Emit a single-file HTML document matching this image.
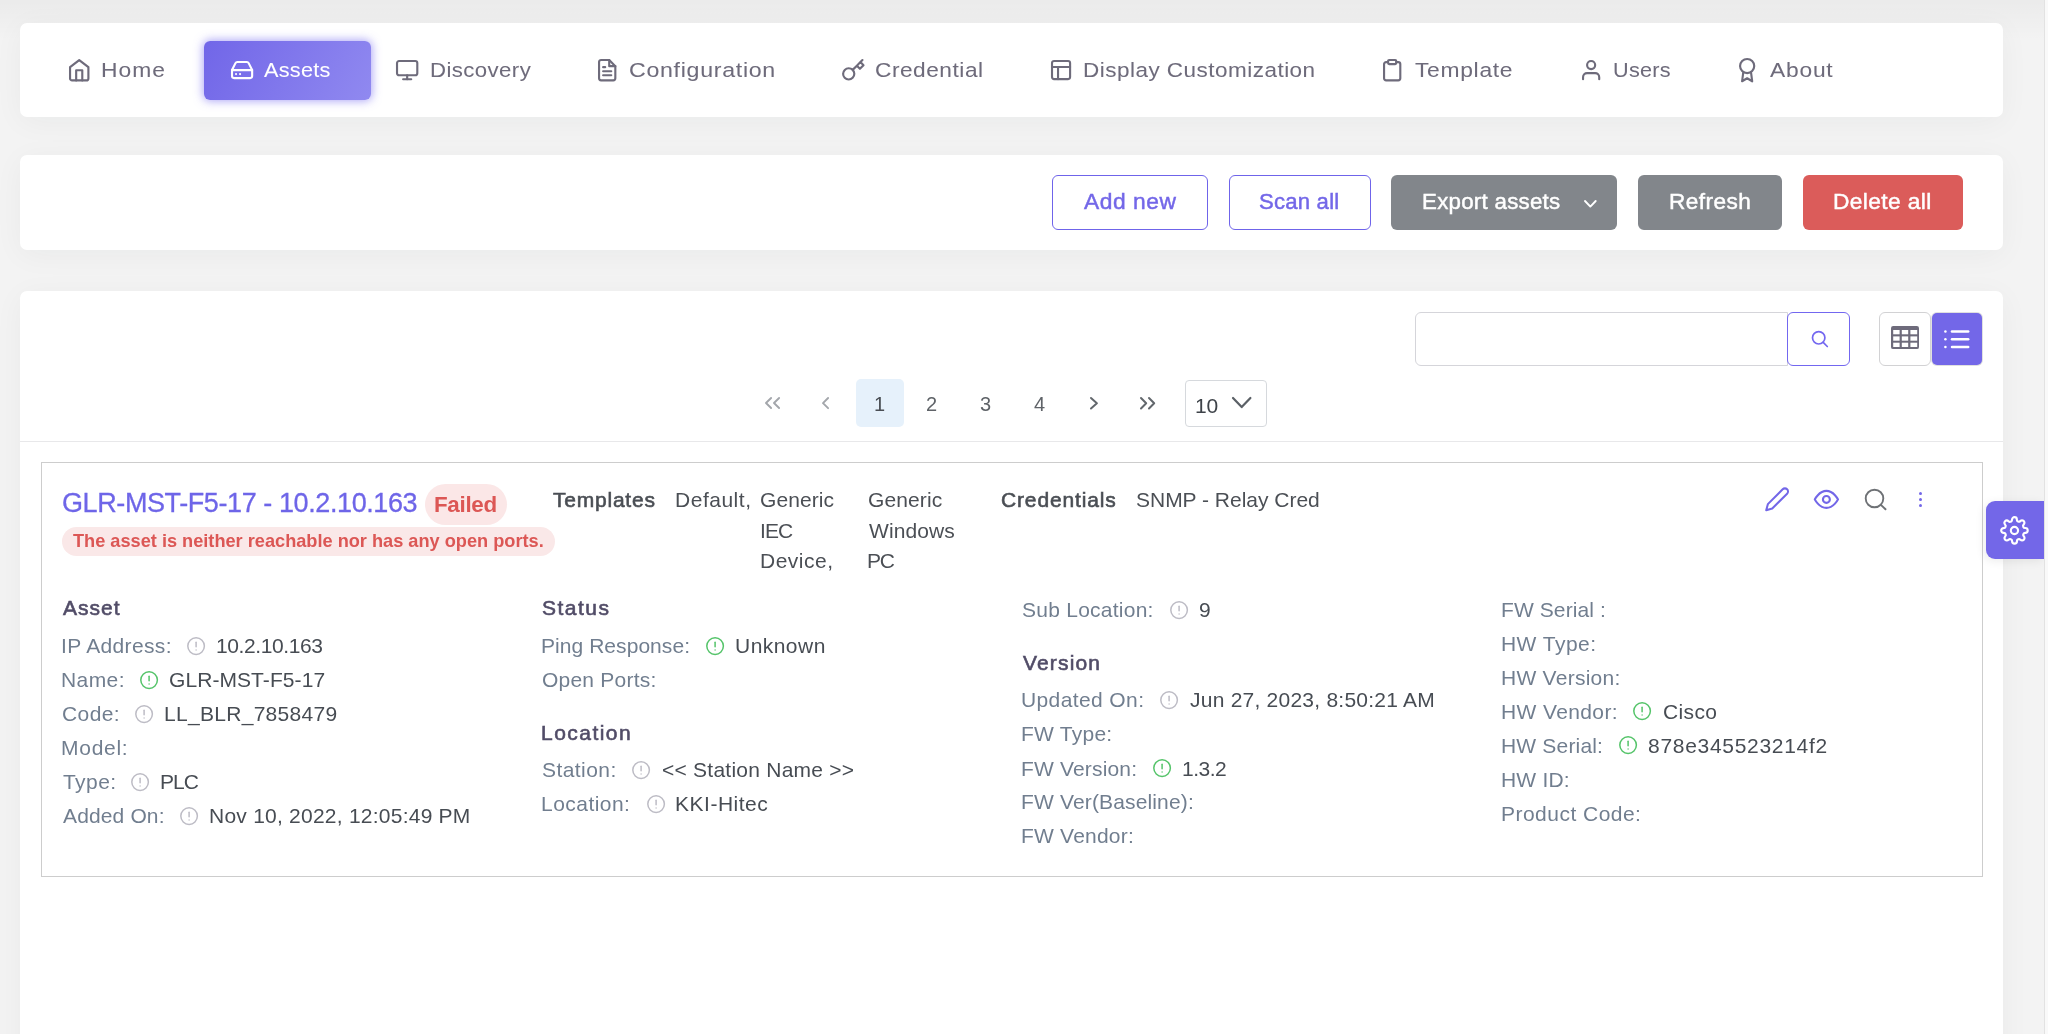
<!DOCTYPE html>
<html><head><meta charset="utf-8"><title>Assets</title>
<style>
html,body{margin:0;padding:0;}
body{width:2048px;height:1034px;overflow:hidden;background:#f3f3f3;position:relative;font-family:"Liberation Sans",sans-serif;}
.card{position:absolute;left:20px;width:1983px;background:#fff;border-radius:7px;box-shadow:0 5px 30px rgba(34,41,47,0.045);}
.t{position:absolute;white-space:nowrap;line-height:1;will-change:transform;}
.m{-webkit-text-stroke:0.05px currentColor;}
.sb2{-webkit-text-stroke:0.6px currentColor;}
.tt{-webkit-text-stroke:0.3px currentColor;}
.m2{-webkit-text-stroke:0.45px currentColor;}
.b{position:absolute;box-sizing:border-box;}
.ob{border:1.8px solid #6f64ea;border-radius:6px;}
.i{position:absolute;overflow:visible;}
.sb{position:absolute;left:2044px;top:0;width:4px;height:1034px;background:#f9f9f9;border-left:1px solid #e2e2e2;box-sizing:border-box;}
</style></head><body>
<div class="b" style="left:0;top:0;width:2048px;height:40px;background:linear-gradient(rgba(0,0,0,0.035),rgba(0,0,0,0))"></div>
<div class="card" style="top:23px;height:94px"></div>
<div class="card" style="top:155px;height:95px"></div>
<div class="card" style="top:291px;height:800px"></div>
<div class="b" style="left:204px;top:40.5px;width:167px;height:59px;border-radius:6px;background:linear-gradient(118deg,#7166e8,#9089f0);box-shadow:0 0 10px 1px rgba(115,103,240,0.6)"></div>
<div class="t m" style="left:100.57px;top:58.62px;font-size:21px;color:#6e6b7b;font-weight:400;letter-spacing:0.951px;transform:scaleX(1.0871);transform-origin:0 0;">Home</div>
<div class="t m" style="left:264.00px;top:58.62px;font-size:21px;color:#fff;font-weight:400;letter-spacing:0.258px;transform:scaleX(1.0321);transform-origin:0 0;">Assets</div>
<div class="t m" style="left:429.53px;top:58.62px;font-size:21px;color:#6e6b7b;font-weight:400;letter-spacing:0.402px;transform:scaleX(1.0563);transform-origin:0 0;">Discovery</div>
<div class="t m" style="left:629.44px;top:58.62px;font-size:21px;color:#6e6b7b;font-weight:400;letter-spacing:0.637px;transform:scaleX(1.1031);transform-origin:0 0;">Configuration</div>
<div class="t m" style="left:875.27px;top:58.62px;font-size:21px;color:#6e6b7b;font-weight:400;letter-spacing:0.501px;transform:scaleX(1.0781);transform-origin:0 0;">Credential</div>
<div class="t m" style="left:1083.20px;top:58.62px;font-size:21px;color:#6e6b7b;font-weight:400;letter-spacing:0.451px;transform:scaleX(1.0708);transform-origin:0 0;">Display Customization</div>
<div class="t m" style="left:1415.24px;top:58.62px;font-size:21px;color:#6e6b7b;font-weight:400;letter-spacing:0.641px;transform:scaleX(1.0873);transform-origin:0 0;">Template</div>
<div class="t m" style="left:1612.78px;top:58.62px;font-size:21px;color:#6e6b7b;font-weight:400;letter-spacing:0.252px;transform:scaleX(1.0297);transform-origin:0 0;">Users</div>
<div class="t m" style="left:1770.30px;top:58.62px;font-size:21px;color:#6e6b7b;font-weight:400;letter-spacing:0.718px;transform:scaleX(1.0853);transform-origin:0 0;">About</div>
<svg class="i" style="left:67.16px;top:57.98px;width:24.46px;height:24.46px;color:#6e6b7b;" viewBox="0 0 24 24" fill="none" stroke="currentColor" stroke-width="2.1" stroke-linecap="round" stroke-linejoin="round"><path d="M3 9l9-7 9 7v11a2 2 0 0 1-2 2H5a2 2 0 0 1-2-2z"/><polyline points="9 22 9 12 15 12 15 22"/></svg>
<svg class="i" style="left:229.99px;top:58.38px;width:24.17px;height:24.17px;color:#fff;" viewBox="0 0 24 24" fill="none" stroke="currentColor" stroke-width="2.1" stroke-linecap="round" stroke-linejoin="round"><line x1="22" y1="12" x2="2" y2="12"/><path d="M5.45 5.11L2 12v6a2 2 0 0 0 2 2h16a2 2 0 0 0 2-2v-6l-3.45-6.89A2 2 0 0 0 16.76 4H7.24a2 2 0 0 0-1.79 1.11z"/><line x1="6" y1="16" x2="6.01" y2="16"/><line x1="10" y1="16" x2="10.01" y2="16"/></svg>
<svg class="i" style="left:395.39px;top:57.97px;width:24.33px;height:24.33px;color:#6e6b7b;" viewBox="0 0 24 24" fill="none" stroke="currentColor" stroke-width="2.1" stroke-linecap="round" stroke-linejoin="round"><rect x="2" y="3" width="20" height="14" rx="2" ry="2"/><line x1="8" y1="21" x2="16" y2="21"/><line x1="12" y1="17" x2="12" y2="21"/></svg>
<svg class="i" style="left:595.35px;top:57.98px;width:24.40px;height:24.40px;color:#6e6b7b;" viewBox="0 0 24 24" fill="none" stroke="currentColor" stroke-width="2.1" stroke-linecap="round" stroke-linejoin="round"><path d="M14 2H6a2 2 0 0 0-2 2v16a2 2 0 0 0 2 2h12a2 2 0 0 0 2-2V8z"/><polyline points="14 2 14 8 20 8"/><line x1="16" y1="13" x2="8" y2="13"/><line x1="16" y1="17" x2="8" y2="17"/><polyline points="10 9 9 9 8 9"/></svg>
<svg class="i" style="left:841.17px;top:57.88px;width:24.55px;height:24.55px;color:#6e6b7b;" viewBox="0 0 24 24" fill="none" stroke="currentColor" stroke-width="2.1" stroke-linecap="round" stroke-linejoin="round"><path d="M21 2l-2 2m-7.61 7.61a5.5 5.5 0 1 1-7.778 7.778 5.5 5.5 0 0 1 7.777-7.777zm0 0L15.5 7.5m0 0l3 3L22 7l-3-3m-3.5 3.5L19 4"/></svg>
<svg class="i" style="left:1048.99px;top:57.99px;width:24.12px;height:24.12px;color:#6e6b7b;" viewBox="0 0 24 24" fill="none" stroke="currentColor" stroke-width="2.1" stroke-linecap="round" stroke-linejoin="round"><rect x="3" y="3" width="18" height="18" rx="2" ry="2"/><line x1="3" y1="9" x2="21" y2="9"/><line x1="9" y1="21" x2="9" y2="9"/></svg>
<svg class="i" style="left:1379.86px;top:58.49px;width:24.36px;height:24.36px;color:#6e6b7b;" viewBox="0 0 24 24" fill="none" stroke="currentColor" stroke-width="2.1" stroke-linecap="round" stroke-linejoin="round"><path d="M16 4h2a2 2 0 0 1 2 2v14a2 2 0 0 1-2 2H6a2 2 0 0 1-2-2V6a2 2 0 0 1 2-2h2"/><rect x="8" y="2" width="8" height="4" rx="1" ry="1"/></svg>
<svg class="i" style="left:1578.97px;top:58.18px;width:24.27px;height:24.27px;color:#6e6b7b;" viewBox="0 0 24 24" fill="none" stroke="currentColor" stroke-width="2.1" stroke-linecap="round" stroke-linejoin="round"><path d="M20 21v-2a4 4 0 0 0-4-4H8a4 4 0 0 0-4 4v2"/><circle cx="12" cy="7" r="4"/></svg>
<svg class="i" style="left:1734.65px;top:58.40px;width:24.30px;height:24.30px;color:#6e6b7b;" viewBox="0 0 24 24" fill="none" stroke="currentColor" stroke-width="2.1" stroke-linecap="round" stroke-linejoin="round"><circle cx="12" cy="8" r="7"/><polyline points="8.21 13.89 7 23 12 20 17 23 15.79 13.88"/></svg>
<div class="b ob" style="left:1052px;top:175.3px;width:155.5px;height:54.4px"></div>
<div class="b ob" style="left:1228.7px;top:175.3px;width:141.9px;height:54.4px"></div>
<div class="b" style="left:1391.3px;top:175.3px;width:226.1px;height:54.4px;background:#82868b;border-radius:6px"></div>
<div class="b" style="left:1638.2px;top:175.3px;width:143.8px;height:54.4px;background:#82868b;border-radius:6px"></div>
<div class="b" style="left:1802.7px;top:175.3px;width:159.9px;height:54.4px;background:#db5c5a;border-radius:6px"></div>
<div class="t m2" style="left:1083.70px;top:192.00px;font-size:21.5px;color:#7367e8;font-weight:400;letter-spacing:0.526px;transform:scaleX(1.0599);transform-origin:0 0;">Add new</div>
<div class="t m2" style="left:1259.20px;top:192.00px;font-size:21.5px;color:#7367e8;font-weight:400;letter-spacing:0.201px;transform:scaleX(1.0293);transform-origin:0 0;">Scan all</div>
<div class="t m2" style="left:1421.82px;top:192.00px;font-size:21.5px;color:#fff;font-weight:400;letter-spacing:0.253px;transform:scaleX(1.0370);transform-origin:0 0;">Export assets</div>
<div class="t m2" style="left:1668.59px;top:192.00px;font-size:21.5px;color:#fff;font-weight:400;letter-spacing:0.403px;transform:scaleX(1.0528);transform-origin:0 0;">Refresh</div>
<div class="t m2" style="left:1832.88px;top:192.00px;font-size:21.5px;color:#fff;font-weight:400;letter-spacing:0.355px;transform:scaleX(1.0587);transform-origin:0 0;">Delete all</div>
<svg class="i" style="left:1582.80px;top:198.80px;width:14.70px;height:9.60px;color:#fff;" viewBox="0 0 14.7 9.6" fill="none" stroke="currentColor" stroke-width="1.9" stroke-linecap="round" stroke-linejoin="round"><polyline points="2 2 7.35 7.6 12.7 2"/></svg>
<div class="b" style="left:1414.9px;top:311.7px;width:373px;height:54.2px;border:1.5px solid #d5d5da;border-radius:6px 0 0 6px;box-sizing:border-box"></div>
<div class="b" style="left:1786.9px;top:311.5px;width:63.1px;height:54.3px;border:1.7px solid #7367f0;border-radius:6px;box-sizing:border-box"></div>
<svg class="i" style="left:1808.00px;top:327.00px;width:22.00px;height:22.00px;color:#7367f0;" viewBox="0 0 22 22" fill="none" stroke="currentColor" stroke-width="1.7" stroke-linecap="round" stroke-linejoin="round"><circle cx="10.7" cy="10.8" r="6.2"/><line x1="15.2" y1="15.3" x2="19.3" y2="19.5"/></svg>
<div class="b" style="left:1879.4px;top:311.5px;width:52px;height:54.5px;border:1.8px solid #d2d2d4;border-radius:6px;box-sizing:border-box"></div>
<div class="b" style="left:1932.3px;top:312.8px;width:49.3px;height:52.5px;background:#7367e8;border-radius:5px;box-shadow:0 0 0 1px rgba(0,0,0,0.12)"></div>
<svg class="i" style="left:1890.80px;top:326.30px;width:28.00px;height:23.10px;color:#6e6b7b;" viewBox="0 0 28 23.1" fill="none" stroke="currentColor" stroke-width="0" stroke-linecap="round" stroke-linejoin="round"><rect x="0" y="0" width="28" height="23.1" rx="2.2" fill="#6e6b7b" stroke="none"/><rect x="2.20" y="4.00" width="6.40" height="4.30" fill="#fff" stroke="none"/><rect x="2.20" y="10.40" width="6.40" height="4.30" fill="#fff" stroke="none"/><rect x="2.20" y="16.70" width="6.40" height="4.30" fill="#fff" stroke="none"/><rect x="10.80" y="4.00" width="6.40" height="4.30" fill="#fff" stroke="none"/><rect x="10.80" y="10.40" width="6.40" height="4.30" fill="#fff" stroke="none"/><rect x="10.80" y="16.70" width="6.40" height="4.30" fill="#fff" stroke="none"/><rect x="19.40" y="4.00" width="6.80" height="4.30" fill="#fff" stroke="none"/><rect x="19.40" y="10.40" width="6.80" height="4.30" fill="#fff" stroke="none"/><rect x="19.40" y="16.70" width="6.80" height="4.30" fill="#fff" stroke="none"/></svg>
<svg class="i" style="left:1944.30px;top:329.60px;width:25.30px;height:18.30px;color:#fff;" viewBox="0 0 25.3 18.3" fill="none" stroke="currentColor" stroke-width="2.5" stroke-linecap="round" stroke-linejoin="round"><line x1="8" y1="1.4" x2="24.2" y2="1.4"/><line x1="8" y1="9.15" x2="24.2" y2="9.15"/><line x1="8" y1="16.9" x2="24.2" y2="16.9"/><line x1="1.4" y1="1.4" x2="1.42" y2="1.4"/><line x1="1.4" y1="9.15" x2="1.42" y2="9.15"/><line x1="1.4" y1="16.9" x2="1.42" y2="16.9"/></svg>
<div class="b" style="left:856px;top:379.4px;width:47.8px;height:47.6px;background:#e6f1fb;border-radius:5px"></div>
<svg class="i" style="left:763.90px;top:396.10px;width:9.10px;height:14.00px;color:#a3a6ab;" viewBox="0 0 9.10 14.00" fill="none" stroke="currentColor" stroke-width="1.9" stroke-linecap="round" stroke-linejoin="round"><polyline points="7.10 2.00 2.00 7.00 7.10 12.00"/></svg>
<svg class="i" style="left:772.20px;top:396.10px;width:9.10px;height:14.00px;color:#a3a6ab;" viewBox="0 0 9.10 14.00" fill="none" stroke="currentColor" stroke-width="1.9" stroke-linecap="round" stroke-linejoin="round"><polyline points="7.10 2.00 2.00 7.00 7.10 12.00"/></svg>
<svg class="i" style="left:821.40px;top:396.10px;width:9.10px;height:14.20px;color:#a3a6ab;" viewBox="0 0 9.10 14.20" fill="none" stroke="currentColor" stroke-width="1.9" stroke-linecap="round" stroke-linejoin="round"><polyline points="7.10 2.00 2.00 7.10 7.10 12.20"/></svg>
<svg class="i" style="left:1088.90px;top:395.90px;width:9.90px;height:14.50px;color:#62676c;" viewBox="0 0 9.90 14.50" fill="none" stroke="currentColor" stroke-width="2.0" stroke-linecap="round" stroke-linejoin="round"><polyline points="2.00 2.00 7.90 7.25 2.00 12.50"/></svg>
<svg class="i" style="left:1138.60px;top:395.90px;width:9.20px;height:14.50px;color:#62676c;" viewBox="0 0 9.20 14.50" fill="none" stroke="currentColor" stroke-width="2.0" stroke-linecap="round" stroke-linejoin="round"><polyline points="2.00 2.00 7.20 7.25 2.00 12.50"/></svg>
<svg class="i" style="left:1146.70px;top:395.90px;width:9.20px;height:14.50px;color:#62676c;" viewBox="0 0 9.20 14.50" fill="none" stroke="currentColor" stroke-width="2.0" stroke-linecap="round" stroke-linejoin="round"><polyline points="2.00 2.00 7.20 7.25 2.00 12.50"/></svg>
<div class="t" style="left:873.50px;top:393.87px;font-size:20px;color:#4a4e54;font-weight:400;letter-spacing:0.000px;">1</div>
<div class="t" style="left:926.20px;top:393.87px;font-size:20px;color:#5f6368;font-weight:400;letter-spacing:0.000px;">2</div>
<div class="t" style="left:980.30px;top:393.87px;font-size:20px;color:#5f6368;font-weight:400;letter-spacing:0.000px;">3</div>
<div class="t" style="left:1033.60px;top:393.87px;font-size:20px;color:#5f6368;font-weight:400;letter-spacing:0.000px;">4</div>
<div class="b" style="left:1185.3px;top:380px;width:81.7px;height:47px;border:1.5px solid #d6d9dd;border-radius:4px;box-sizing:border-box"></div>
<div class="t" style="left:1194.92px;top:395.22px;font-size:21px;color:#3e4349;font-weight:400;letter-spacing:-0.300px;">10</div>
<svg class="i" style="left:1231.20px;top:396.40px;width:21.40px;height:13.10px;color:#5b6066;" viewBox="0 0 21.4 13.1" fill="none" stroke="currentColor" stroke-width="2.2" stroke-linecap="round" stroke-linejoin="round"><polyline points="2 2 10.7 11.1 19.4 2"/></svg>
<div class="b" style="left:20px;top:440.5px;width:1983px;height:1.5px;background:#e8e8ea"></div>
<div class="b" style="left:40.5px;top:461.8px;width:1942px;height:415px;border:1.5px solid #cdcdcd;box-sizing:border-box"></div>
<div class="t tt" style="left:62.25px;top:490.14px;font-size:27px;color:#6e65e8;font-weight:400;letter-spacing:-0.407px;">GLR-MST-F5-17 - 10.2.10.163</div>
<div class="b" style="left:424.8px;top:483.6px;width:82.7px;height:41.1px;background:#fbe7e7;border-radius:21px"></div>
<div class="t" style="left:434.44px;top:493.64px;font-size:22.4px;color:#dc5755;font-weight:700;letter-spacing:-0.305px;">Failed</div>
<div class="b" style="left:62.2px;top:527px;width:492.8px;height:28.9px;background:#fae8e8;border-radius:14.5px"></div>
<div class="t" style="left:72.82px;top:531.89px;font-size:18.2px;color:#dc5755;font-weight:700;letter-spacing:-0.006px;">The asset is neither reachable nor has any open ports.</div>
<div class="t sb2" style="left:553.28px;top:489.02px;font-size:21px;color:#4a4e54;font-weight:400;letter-spacing:0.774px;">Templates</div>
<div class="t" style="left:675.32px;top:489.32px;font-size:21px;color:#4b4f55;font-weight:400;letter-spacing:0.517px;">Default,</div>
<div class="t" style="left:760.45px;top:489.32px;font-size:21px;color:#4b4f55;font-weight:400;letter-spacing:0.096px;">Generic</div>
<div class="t" style="left:759.61px;top:519.82px;font-size:21px;color:#4b4f55;font-weight:400;letter-spacing:-0.920px;">IEC</div>
<div class="t" style="left:759.82px;top:549.92px;font-size:21px;color:#4b4f55;font-weight:400;letter-spacing:0.506px;">Device,</div>
<div class="t" style="left:867.95px;top:489.32px;font-size:21px;color:#4b4f55;font-weight:400;letter-spacing:0.113px;">Generic</div>
<div class="t" style="left:869.00px;top:519.82px;font-size:21px;color:#4b4f55;font-weight:400;letter-spacing:0.097px;">Windows</div>
<div class="t" style="left:867.32px;top:549.92px;font-size:21px;color:#4b4f55;font-weight:400;letter-spacing:-1.370px;">PC</div>
<div class="t sb2" style="left:1000.95px;top:489.02px;font-size:21px;color:#4a4e54;font-weight:400;letter-spacing:0.852px;">Credentials</div>
<div class="t" style="left:1136.06px;top:489.32px;font-size:21px;color:#4b4f55;font-weight:400;letter-spacing:-0.016px;">SNMP - Relay Cred</div>
<svg class="i" style="left:1763.60px;top:485.90px;width:26.40px;height:26.40px;color:#7367e8;" viewBox="0 0 24 24" fill="none" stroke="currentColor" stroke-width="1.85" stroke-linecap="round" stroke-linejoin="round"><path d="M17 3a2.828 2.828 0 1 1 4 4L7.5 20.5 2 22l1.5-5.5L17 3z"/></svg>
<svg class="i" style="left:1813.00px;top:486.30px;width:26.80px;height:26.80px;color:#7367e8;" viewBox="0 0 24 24" fill="none" stroke="currentColor" stroke-width="1.9" stroke-linecap="round" stroke-linejoin="round"><path d="M1.6 12s3.8-7.6 10.4-7.6 10.4 7.6 10.4 7.6-3.8 7.6-10.4 7.6S1.6 12 1.6 12z"/><circle cx="12" cy="12" r="3.1"/></svg>
<svg class="i" style="left:1862.00px;top:486.00px;width:26.00px;height:26.00px;color:#6e7175;" viewBox="0 0 26 26" fill="none" stroke="currentColor" stroke-width="1.9" stroke-linecap="round" stroke-linejoin="round"><circle cx="12.5" cy="12.5" r="8.8"/><line x1="18.9" y1="18.9" x2="23.5" y2="23.3"/></svg>
<div class="b" style="left:1918.90px;top:491.90px;width:3.4px;height:3.4px;border-radius:50%;background:#7367e8"></div>
<div class="b" style="left:1918.90px;top:497.80px;width:3.4px;height:3.4px;border-radius:50%;background:#7367e8"></div>
<div class="b" style="left:1918.90px;top:503.80px;width:3.4px;height:3.4px;border-radius:50%;background:#7367e8"></div>
<div class="t sb2" style="left:63.00px;top:597.42px;font-size:21px;color:#514c67;font-weight:400;letter-spacing:1.025px;">Asset</div>
<div class="t" style="left:61.11px;top:635.22px;font-size:21px;color:#717e8f;font-weight:400;letter-spacing:0.348px;">IP Address:</div>
<svg class="i" style="left:187.20px;top:636.60px;width:18.20px;height:18.20px;color:#bdbcc5;" viewBox="0 0 18.2 18.2" fill="none" stroke="currentColor" stroke-width="1.5" stroke-linecap="round" stroke-linejoin="round"><circle cx="9.1" cy="9.1" r="8.3"/><line x1="9.1" y1="5.2" x2="9.1" y2="9.8"/><line x1="9.1" y1="12.9" x2="9.1" y2="12.95"/></svg>
<div class="t" style="left:215.93px;top:635.22px;font-size:21px;color:#474c53;font-weight:400;letter-spacing:-0.397px;">10.2.10.163</div>
<div class="t" style="left:61.32px;top:669.22px;font-size:21px;color:#717e8f;font-weight:400;letter-spacing:0.405px;">Name:</div>
<svg class="i" style="left:140.00px;top:670.60px;width:18.20px;height:18.20px;color:#55c46a;" viewBox="0 0 18.2 18.2" fill="none" stroke="currentColor" stroke-width="1.5" stroke-linecap="round" stroke-linejoin="round"><circle cx="9.1" cy="9.1" r="8.3"/><line x1="9.1" y1="5.2" x2="9.1" y2="9.8"/><line x1="9.1" y1="12.9" x2="9.1" y2="12.95"/></svg>
<div class="t" style="left:169.45px;top:669.22px;font-size:21px;color:#474c53;font-weight:400;letter-spacing:0.075px;">GLR-MST-F5-17</div>
<div class="t" style="left:61.95px;top:703.22px;font-size:21px;color:#717e8f;font-weight:400;letter-spacing:0.417px;">Code:</div>
<svg class="i" style="left:135.30px;top:704.60px;width:18.20px;height:18.20px;color:#bdbcc5;" viewBox="0 0 18.2 18.2" fill="none" stroke="currentColor" stroke-width="1.5" stroke-linecap="round" stroke-linejoin="round"><circle cx="9.1" cy="9.1" r="8.3"/><line x1="9.1" y1="5.2" x2="9.1" y2="9.8"/><line x1="9.1" y1="12.9" x2="9.1" y2="12.95"/></svg>
<div class="t" style="left:164.12px;top:703.22px;font-size:21px;color:#474c53;font-weight:400;letter-spacing:0.297px;">LL_BLR_7858479</div>
<div class="t" style="left:61.32px;top:737.22px;font-size:21px;color:#717e8f;font-weight:400;letter-spacing:0.733px;">Model:</div>
<div class="t" style="left:62.58px;top:771.22px;font-size:21px;color:#717e8f;font-weight:400;letter-spacing:0.440px;">Type:</div>
<svg class="i" style="left:131.40px;top:772.60px;width:18.20px;height:18.20px;color:#bdbcc5;" viewBox="0 0 18.2 18.2" fill="none" stroke="currentColor" stroke-width="1.5" stroke-linecap="round" stroke-linejoin="round"><circle cx="9.1" cy="9.1" r="8.3"/><line x1="9.1" y1="5.2" x2="9.1" y2="9.8"/><line x1="9.1" y1="12.9" x2="9.1" y2="12.95"/></svg>
<div class="t" style="left:160.32px;top:771.22px;font-size:21px;color:#474c53;font-weight:400;letter-spacing:-0.965px;">PLC</div>
<div class="t" style="left:63.00px;top:805.22px;font-size:21px;color:#717e8f;font-weight:400;letter-spacing:0.138px;">Added On:</div>
<svg class="i" style="left:180.20px;top:806.60px;width:18.20px;height:18.20px;color:#bdbcc5;" viewBox="0 0 18.2 18.2" fill="none" stroke="currentColor" stroke-width="1.5" stroke-linecap="round" stroke-linejoin="round"><circle cx="9.1" cy="9.1" r="8.3"/><line x1="9.1" y1="5.2" x2="9.1" y2="9.8"/><line x1="9.1" y1="12.9" x2="9.1" y2="12.95"/></svg>
<div class="t" style="left:208.52px;top:805.22px;font-size:21px;color:#474c53;font-weight:400;letter-spacing:0.237px;">Nov 10, 2022, 12:05:49 PM</div>
<div class="t sb2" style="left:542.05px;top:597.42px;font-size:21px;color:#514c67;font-weight:400;letter-spacing:1.489px;">Status</div>
<div class="t" style="left:541.32px;top:635.22px;font-size:21px;color:#717e8f;font-weight:400;letter-spacing:0.055px;">Ping Response:</div>
<svg class="i" style="left:706.00px;top:636.60px;width:18.20px;height:18.20px;color:#55c46a;" viewBox="0 0 18.2 18.2" fill="none" stroke="currentColor" stroke-width="1.5" stroke-linecap="round" stroke-linejoin="round"><circle cx="9.1" cy="9.1" r="8.3"/><line x1="9.1" y1="5.2" x2="9.1" y2="9.8"/><line x1="9.1" y1="12.9" x2="9.1" y2="12.95"/></svg>
<div class="t" style="left:735.12px;top:635.22px;font-size:21px;color:#474c53;font-weight:400;letter-spacing:0.461px;">Unknown</div>
<div class="t" style="left:542.05px;top:669.22px;font-size:21px;color:#717e8f;font-weight:400;letter-spacing:0.219px;">Open Ports:</div>
<div class="t sb2" style="left:541.32px;top:722.02px;font-size:21px;color:#514c67;font-weight:400;letter-spacing:1.466px;">Location</div>
<div class="t" style="left:542.05px;top:759.22px;font-size:21px;color:#717e8f;font-weight:400;letter-spacing:0.434px;">Station:</div>
<svg class="i" style="left:632.30px;top:760.60px;width:18.20px;height:18.20px;color:#bdbcc5;" viewBox="0 0 18.2 18.2" fill="none" stroke="currentColor" stroke-width="1.5" stroke-linecap="round" stroke-linejoin="round"><circle cx="9.1" cy="9.1" r="8.3"/><line x1="9.1" y1="5.2" x2="9.1" y2="9.8"/><line x1="9.1" y1="12.9" x2="9.1" y2="12.95"/></svg>
<div class="t" style="left:661.85px;top:759.22px;font-size:21px;color:#474c53;font-weight:400;letter-spacing:0.244px;">&lt;&lt; Station Name &gt;&gt;</div>
<div class="t" style="left:541.32px;top:793.22px;font-size:21px;color:#717e8f;font-weight:400;letter-spacing:0.464px;">Location:</div>
<svg class="i" style="left:646.60px;top:794.60px;width:18.20px;height:18.20px;color:#bdbcc5;" viewBox="0 0 18.2 18.2" fill="none" stroke="currentColor" stroke-width="1.5" stroke-linecap="round" stroke-linejoin="round"><circle cx="9.1" cy="9.1" r="8.3"/><line x1="9.1" y1="5.2" x2="9.1" y2="9.8"/><line x1="9.1" y1="12.9" x2="9.1" y2="12.95"/></svg>
<div class="t" style="left:675.02px;top:793.22px;font-size:21px;color:#474c53;font-weight:400;letter-spacing:0.510px;">KKI-Hitec</div>
<div class="t" style="left:1021.75px;top:599.22px;font-size:21px;color:#717e8f;font-weight:400;letter-spacing:0.251px;">Sub Location:</div>
<svg class="i" style="left:1169.70px;top:600.60px;width:18.20px;height:18.20px;color:#bdbcc5;" viewBox="0 0 18.2 18.2" fill="none" stroke="currentColor" stroke-width="1.5" stroke-linecap="round" stroke-linejoin="round"><circle cx="9.1" cy="9.1" r="8.3"/><line x1="9.1" y1="5.2" x2="9.1" y2="9.8"/><line x1="9.1" y1="12.9" x2="9.1" y2="12.95"/></svg>
<div class="t" style="left:1198.76px;top:599.22px;font-size:21px;color:#474c53;font-weight:400;letter-spacing:0.000px;">9</div>
<div class="t sb2" style="left:1022.70px;top:651.82px;font-size:21px;color:#514c67;font-weight:400;letter-spacing:1.154px;">Version</div>
<div class="t" style="left:1021.12px;top:689.22px;font-size:21px;color:#717e8f;font-weight:400;letter-spacing:0.389px;">Updated On:</div>
<svg class="i" style="left:1160.00px;top:690.60px;width:18.20px;height:18.20px;color:#bdbcc5;" viewBox="0 0 18.2 18.2" fill="none" stroke="currentColor" stroke-width="1.5" stroke-linecap="round" stroke-linejoin="round"><circle cx="9.1" cy="9.1" r="8.3"/><line x1="9.1" y1="5.2" x2="9.1" y2="9.8"/><line x1="9.1" y1="12.9" x2="9.1" y2="12.95"/></svg>
<div class="t" style="left:1190.28px;top:689.22px;font-size:21px;color:#474c53;font-weight:400;letter-spacing:0.235px;">Jun 27, 2023, 8:50:21 AM</div>
<div class="t" style="left:1021.02px;top:723.22px;font-size:21px;color:#717e8f;font-weight:400;letter-spacing:0.244px;">FW Type:</div>
<div class="t" style="left:1021.02px;top:757.52px;font-size:21px;color:#717e8f;font-weight:400;letter-spacing:0.162px;">FW Version:</div>
<svg class="i" style="left:1152.70px;top:758.90px;width:18.20px;height:18.20px;color:#55c46a;" viewBox="0 0 18.2 18.2" fill="none" stroke="currentColor" stroke-width="1.5" stroke-linecap="round" stroke-linejoin="round"><circle cx="9.1" cy="9.1" r="8.3"/><line x1="9.1" y1="5.2" x2="9.1" y2="9.8"/><line x1="9.1" y1="12.9" x2="9.1" y2="12.95"/></svg>
<div class="t" style="left:1182.02px;top:757.52px;font-size:21px;color:#474c53;font-weight:400;letter-spacing:-0.501px;">1.3.2</div>
<div class="t" style="left:1021.02px;top:791.42px;font-size:21px;color:#717e8f;font-weight:400;letter-spacing:0.147px;">FW Ver(Baseline):</div>
<div class="t" style="left:1021.02px;top:824.62px;font-size:21px;color:#717e8f;font-weight:400;letter-spacing:0.210px;">FW Vendor:</div>
<div class="t" style="left:1500.52px;top:599.12px;font-size:21px;color:#717e8f;font-weight:400;letter-spacing:0.093px;">FW Serial :</div>
<div class="t" style="left:1500.52px;top:632.92px;font-size:21px;color:#717e8f;font-weight:400;letter-spacing:0.456px;">HW Type:</div>
<div class="t" style="left:1500.52px;top:667.02px;font-size:21px;color:#717e8f;font-weight:400;letter-spacing:0.261px;">HW Version:</div>
<div class="t" style="left:1500.52px;top:700.92px;font-size:21px;color:#717e8f;font-weight:400;letter-spacing:0.375px;">HW Vendor:</div>
<svg class="i" style="left:1633.00px;top:702.30px;width:18.20px;height:18.20px;color:#55c46a;" viewBox="0 0 18.2 18.2" fill="none" stroke="currentColor" stroke-width="1.5" stroke-linecap="round" stroke-linejoin="round"><circle cx="9.1" cy="9.1" r="8.3"/><line x1="9.1" y1="5.2" x2="9.1" y2="9.8"/><line x1="9.1" y1="12.9" x2="9.1" y2="12.95"/></svg>
<div class="t" style="left:1662.55px;top:700.92px;font-size:21px;color:#474c53;font-weight:400;letter-spacing:0.373px;">Cisco</div>
<div class="t" style="left:1500.52px;top:734.72px;font-size:21px;color:#717e8f;font-weight:400;letter-spacing:0.177px;">HW Serial:</div>
<svg class="i" style="left:1618.70px;top:736.10px;width:18.20px;height:18.20px;color:#55c46a;" viewBox="0 0 18.2 18.2" fill="none" stroke="currentColor" stroke-width="1.5" stroke-linecap="round" stroke-linejoin="round"><circle cx="9.1" cy="9.1" r="8.3"/><line x1="9.1" y1="5.2" x2="9.1" y2="9.8"/><line x1="9.1" y1="12.9" x2="9.1" y2="12.95"/></svg>
<div class="t" style="left:1647.76px;top:734.72px;font-size:21px;color:#474c53;font-weight:400;letter-spacing:0.701px;">878e345523214f2</div>
<div class="t" style="left:1500.52px;top:768.82px;font-size:21px;color:#717e8f;font-weight:400;letter-spacing:0.209px;">HW ID:</div>
<div class="t" style="left:1500.52px;top:802.92px;font-size:21px;color:#717e8f;font-weight:400;letter-spacing:0.473px;">Product Code:</div>
<div class="b" style="left:1985.9px;top:500.8px;width:58px;height:57.9px;background:#7367e8;border-radius:9px 0 0 9px;box-shadow:-2px 2px 10px rgba(0,0,0,0.08)"></div>
<svg class="i" style="left:1999.90px;top:515.50px;width:28.90px;height:28.90px;color:#fff;" viewBox="0 0 24 24" fill="none" stroke="currentColor" stroke-width="1.8" stroke-linecap="round" stroke-linejoin="round"><circle cx="12" cy="12" r="3"/><path d="M19.4 15a1.65 1.65 0 0 0 .33 1.82l.06.06a2 2 0 0 1 0 2.83 2 2 0 0 1-2.83 0l-.06-.06a1.65 1.650 0 0 0-1.82-.33 1.65 1.65 0 0 0-1 1.51V21a2 2 0 0 1-2 2 2 2 0 0 1-2-2v-.09A1.65 1.65 0 0 0 9 19.4a1.65 1.65 0 0 0-1.82.33l-.06.06a2 2 0 0 1-2.83 0 2 2 0 0 1 0-2.83l.06-.06a1.65 1.65 0 0 0 .33-1.82 1.65 1.65 0 0 0-1.51-1H3a2 2 0 0 1-2-2 2 2 0 0 1 2-2h.09A1.65 1.65 0 0 0 4.6 9a1.65 1.65 0 0 0-.33-1.82l-.06-.06a2 2 0 0 1 0-2.830 2 2 0 0 1 2.83 0l.06.06a1.65 1.65 0 0 0 1.82.33H9a1.65 1.65 0 0 0 1-1.51V3a2 2 0 0 1 2-2 2 2 0 0 1 2 2v.09a1.65 1.65 0 0 0 1 1.51 1.65 1.65 0 0 0 1.82-.33l.06-.06a2 2 0 0 1 2.83 0 2 2 0 0 1 0 2.83l-.06.06a1.65 1.65 0 0 0-.33 1.82V9a1.65 1.65 0 0 0 1.51 1H21a2 2 0 0 1 2 2 2 2 0 0 1-2 2h-.09a1.65 1.65 0 0 0-1.51 1z"/></svg>
<div class="sb"></div>
</body></html>
